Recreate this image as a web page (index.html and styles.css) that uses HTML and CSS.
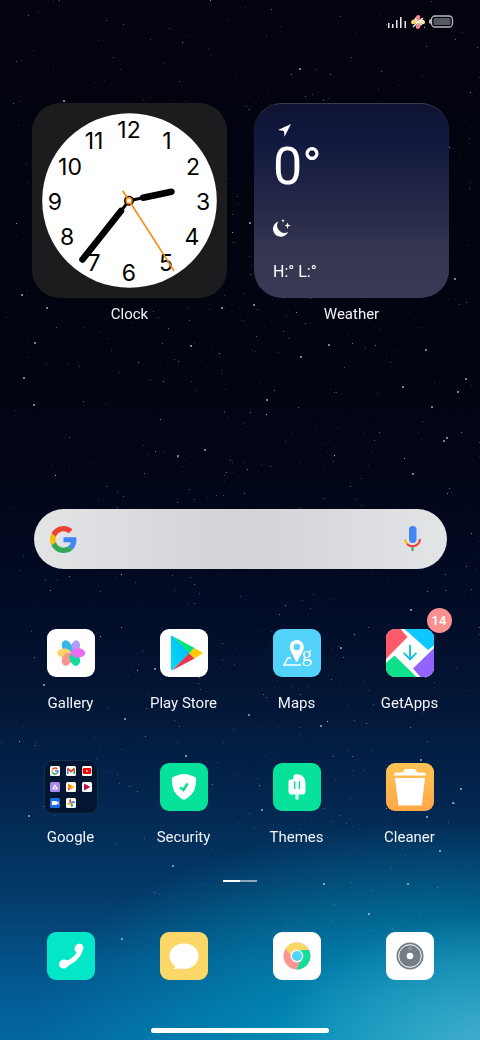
FILE: index.html
```
<!DOCTYPE html>
<html lang="en">
<head>
    <meta charset="UTF-8">
    <meta name="viewport" content="width=device-width, initial-scale=1">
    <title>Home Screen</title>
    <link rel="stylesheet" href="styles.css">
</head>
<body>
    <canvas id="stars" class="stars"></canvas>

    <div class="screen">
        <header class="status-bar">
            <svg class="signal" viewBox="0 0 20 12" aria-label="Signal">
                <path d="M1 12V7h1.500v5zM5 12V8h1.500v4zM9 12V4h1.500v8zM13 12V1h1.600v11zM17.500 12V5H19v7z" fill="#e8e8ea"/>
            </svg>
            <svg class="pinwheel" viewBox="0 0 14 14" aria-hidden="true">
                <path d="M7 7C3 5 4 1 7 0c3 0 3 3 0 7z" fill="#f58a93"/>
                <path d="M7 7c2-4 6-3 7 0 0 3-3 3-7 0z" fill="#fbe3a0"/>
                <path d="M7 7c4 2 3 6 0 7-3 0-3-3 0-7z" fill="#f58a93"/>
                <path d="M7 7c-2-4-6-3-7 0 0 3 3 3 7 0z" fill="#f7d56b"/>
                <path d="M6 8l-4 4M8 6l4-3M5.500 5.500L4 3M8.500 8.500L11 10" stroke="#fff" stroke-width="1.300"/>
                <circle cx="7" cy="7" r="1.300" fill="#fff"/>
            </svg>
            <svg class="battery" viewBox="0 0 25 13" aria-label="Battery">
                <path d="M2 4v5L0 8V5z" fill="#b9bbc0"/>
                <rect x="2.500" y="1" width="21" height="11" rx="3.500" fill="none" stroke="#b9bbc0" stroke-width="1.300"/>
                <rect x="4.500" y="3" width="17" height="7" rx="1.500" fill="#55595e"/>
            </svg>
        </header>

        <main>
            <section class="widgets">
                <div class="widget">
                    <div class="card clock">
                        <svg viewBox="0 0 195 195" aria-label="Clock face">
                            <circle cx="97.500" cy="97.500" r="87.300" fill="#fff"/>
                            <g class="numbers">
                                <text x="97" y="35">12</text>
                                <text x="135" y="46">1</text>
                                <text x="161" y="72">2</text>
                                <text x="171" y="107">3</text>
                                <text x="160" y="142">4</text>
                                <text x="134" y="168">5</text>
                                <text x="97" y="178">6</text>
                                <text x="62" y="168">7</text>
                                <text x="35" y="142">8</text>
                                <text x="23" y="107">9</text>
                                <text x="38" y="72">10</text>
                                <text x="62" y="46">11</text>
                            </g>
                            <g stroke="#000" stroke-linecap="round">
                                <path d="M97 97.700L111 94.700M97 97.700L89 108" stroke-width="3"/>
                                <path d="M111 94.700L139.500 88.700M89 108L50.500 156.500" stroke-width="6.500"/>
                            </g>
                            <circle cx="97" cy="97.700" r="5" fill="#000"/>
                            <path d="M90.700 87.700L142 167.700" stroke="#f98a0c" stroke-width="1.600"/>
                            <circle cx="97" cy="97.700" r="2.900" fill="#fff" stroke="#f98a0c" stroke-width="1.500"/>
                        </svg>
                    </div>
                    <p class="label">Clock</p>
                </div>
                <div class="widget">
                    <div class="card weather">
                        <svg class="arrow" viewBox="0 0 13 13" aria-hidden="true"><path d="M13 0L6.500 12.800 6 7 0 6z" fill="#fff"/></svg>
                        <p class="temp">0°</p>
                        <svg class="moon" viewBox="0 0 18 18" aria-hidden="true">
                            <path d="M5.500 2.500A7.800 7.800 0 1 0 15 13 7.300 7.300 0 0 1 5.500 2.500z" fill="#fff"/>
                            <path d="M14.500 3.500l.8 2.200 2.700.8-2.700.8-.8 2.700-.8-2.700-2.200-.8 2.200-.8zM10 0l.5 1.300 1.500.5-1.500.5L10 4l-.5-1.700L8 1.800l1.500-.5z" fill="#fff"/>
                        </svg>
                        <p class="range">H:° L:°</p>
                    </div>
                    <p class="label">Weather</p>
                </div>
            </section>

            <form class="search">
                <svg class="google" viewBox="0 0 48 48" aria-hidden="true">
                    <path fill="#ea4335" d="M24 9.500c3.540 0 6.710 1.220 9.210 3.600l6.850-6.850C35.900 2.380 30.470 0 24 0 14.620 0 6.510 5.380 2.560 13.220l7.980 6.190C12.430 13.720 17.740 9.500 24 9.500z"/>
                    <path fill="#4285f4" d="M46.980 24.550c0-1.570-.15-3.090-.38-4.550H24v9.020h12.940c-.58 2.960-2.260 5.480-4.780 7.180l7.730 6c4.510-4.180 7.090-10.360 7.090-17.650z"/>
                    <path fill="#fbbc05" d="M10.530 28.590c-.48-1.450-.76-2.990-.76-4.590s.27-3.140.76-4.590l-7.980-6.190C.92 16.460 0 20.120 0 24c0 3.880.92 7.540 2.560 10.780z"/>
                    <path fill="#34a853" d="M24 48c6.480 0 11.930-2.130 15.890-5.810l-7.730-6c-2.150 1.450-4.920 2.300-8.160 2.300-6.260 0-11.570-4.220-13.470-9.910l-7.980 6.190C6.510 42.620 14.620 48 24 48z"/>
                </svg>
                <input type="text" aria-label="Search">
                <button type="button" aria-label="Voice search">
                    <svg viewBox="0 0 18 26" aria-hidden="true">
                        <rect x="5.500" y="0" width="7.500" height="17" rx="3.700" fill="#4285f4"/>
                        <path d="M1.500 13c0 2 1 4 2.500 5.200" fill="none" stroke="#fbbc05" stroke-width="2"/>
                        <path d="M3.500 18c3 3 8 3 11 0 1.300-1.300 2-3 2-5" fill="none" stroke="#ea4335" stroke-width="2"/>
                        <path d="M9 21v4" stroke="#34a853" stroke-width="2"/>
                    </svg>
                </button>
            </form>

            <nav class="apps">
                <a class="app" href="#">
                    <svg class="icon" viewBox="0 0 48 48" aria-hidden="true">
                        <rect width="48" height="48" rx="9" fill="#fff"/>
                        <ellipse cx="28.300" cy="18" rx="4.500" ry="6.800" transform="rotate(18 28.300 18)" fill="#b39cfb"/>
                        <ellipse cx="20" cy="18" rx="4.800" ry="7" transform="rotate(-24 20 18)" fill="#38b6e4"/>
                        <ellipse cx="17" cy="24" rx="6.800" ry="4.600" fill="#fbd36d"/>
                        <ellipse cx="20" cy="30.300" rx="4.800" ry="6.800" transform="rotate(24 20 30.300)" fill="#fb9292"/>
                        <ellipse cx="27.800" cy="30" rx="5" ry="7" transform="rotate(-22 27.800 30)" fill="#0fdb9b"/>
                        <ellipse cx="31" cy="24" rx="7.200" ry="4.700" fill="#e86bf0"/>
                    </svg>
                    <span class="label">Gallery</span>
                </a>
                <a class="app" href="#">
                    <svg class="icon" viewBox="0 0 48 48" aria-hidden="true">
                        <defs>
                            <linearGradient id="playBlue" x1="1" y1="0" x2="0" y2="1">
                                <stop offset="0" stop-color="#00b2f5"/>
                                <stop offset="1" stop-color="#00dffb"/>
                            </linearGradient>
                        </defs>
                        <rect width="48" height="48" rx="9" fill="#fff"/>
                        <path d="M11 8v32c0 1 .5 1.500 1.300 1L30 24 12.300 7C11.500 6.500 11 7 11 8z" fill="url(#playBlue)"/>
                        <path d="M12.300 7L34.500 19 29.500 24.300z" fill="#06e37e"/>
                        <path d="M12.300 41.300L34.500 29.500 29.500 24z" fill="#ee3448"/>
                        <path d="M34.500 19l7 4c1 .6 1 1.400 0 2l-7 4.500-5.500-5.300z" fill="#ffca08"/>
                    </svg>
                    <span class="label">Play Store</span>
                </a>
                <a class="app" href="#">
                    <svg class="icon" viewBox="0 0 48 48" aria-hidden="true">
                        <rect width="48" height="48" rx="9" fill="#54d3fa"/>
                        <path d="M18 29h-3L11 36h17" fill="none" stroke="#fff" stroke-width="1.500"/>
                        <path fill-rule="evenodd" d="M23.800 11c-4 0-7 3-7 7 0 5 4 8 6 14.500h2c2-6.500 6-9.500 6-14.500 0-4-3-7-7-7zm0 3.700a3.300 3.300 0 1 1 0 6.600 3.300 3.300 0 0 1 0-6.600z" fill="#fff"/>
                        <text class="maps-g" x="34" y="32">g</text>
                    </svg>
                    <span class="label">Maps</span>
                </a>
                <a class="app" href="#">
                    <span class="icon-wrap">
                        <svg class="icon" viewBox="0 0 48 48" aria-hidden="true">
                            <defs>
                                <clipPath id="tile"><rect width="48" height="48" rx="9"/></clipPath>
                                <linearGradient id="down" x1="0" y1="0" x2="0" y2="1">
                                    <stop offset="0" stop-color="#12d98e"/>
                                    <stop offset="1" stop-color="#12b5ff"/>
                                </linearGradient>
                            </defs>
                            <g clip-path="url(#tile)">
                                <rect width="48" height="48" fill="#fff"/>
                                <path d="M0 0h14.500l7 8L0 30z" fill="#ff5a6c"/>
                                <path d="M18.500 0H48v16.500l-6 4.500z" fill="#0cc8ff"/>
                                <path d="M48 19v29H34.500L27 39.500z" fill="#9463ff"/>
                                <path d="M0 34l8.500-7.500L30.500 48H0z" fill="#0fe08c"/>
                            </g>
                            <path d="M23.100 16h1.900v12l4.800-4.800 1.300 1.300-7 7.200-7-7.200 1.300-1.300 4.700 4.800z" fill="url(#down)"/>
                        </svg>
                        <span class="badge">14</span>
                    </span>
                    <span class="label">GetApps</span>
                </a>

                <a class="app" href="#">
                    <span class="folder">
                        <svg viewBox="0 0 10 10"><rect width="10" height="10" rx="1.500" fill="#fff"/><path d="M2.500 3.500A3 3 0 0 1 7.300 3" stroke="#ea4335" stroke-width="1.500" fill="none"/><path d="M2.500 3.500a3 3 0 0 0 0 3" stroke="#fbbc05" stroke-width="1.500" fill="none"/><path d="M2.500 6.500a3 3 0 0 0 4.500.7" stroke="#34a853" stroke-width="1.500" fill="none"/><path d="M5 5h3a3 3 0 0 1-1 2.200" stroke="#4285f4" stroke-width="1.500" fill="none"/></svg>
                        <svg viewBox="0 0 10 10"><rect width="10" height="10" rx="1.500" fill="#fff"/><path d="M1.800 8V2.500" stroke="#4285f4" stroke-width="1.600"/><path d="M8.200 8V2.500" stroke="#34a853" stroke-width="1.600"/><path d="M1.500 2.500L5 5.500l3.500-3" stroke="#ea4335" stroke-width="1.800" fill="none"/></svg>
                        <svg viewBox="0 0 10 10"><rect width="10" height="10" rx="1.500" fill="#fff"/><rect x=".8" y="2" width="8.400" height="6" rx="1.300" fill="#f00"/><path d="M4.200 3.800v2.400L6.300 5z" fill="#fff"/></svg>
                        <svg viewBox="0 0 10 10"><rect width="10" height="10" rx="1.500" fill="#a98bf0"/><path d="M5 2.300l3 5H2z" fill="#fff"/><circle cx="5" cy="5.700" r=".9" fill="#a98bf0"/></svg>
                        <svg viewBox="0 0 10 10"><rect width="10" height="10" rx="1.500" fill="#fff"/><path d="M2 1.500v7L8.500 5z" fill="#fb8c1a"/><path d="M5 3.200v3.600L8.500 5z" fill="#fbc51a"/><path d="M2 6l2 1.500-2 1z" fill="#e34a3f"/></svg>
                        <svg viewBox="0 0 10 10"><rect width="10" height="10" rx="1.500" fill="#fff"/><path d="M2 1.500v7L8.500 5z" fill="#c2134f"/></svg>
                        <svg viewBox="0 0 10 10"><rect width="10" height="10" rx="1.500" fill="#1a6fe3"/><path d="M1.800 3h5v1.500L8.500 3.300v3.400L6.800 5.500V7h-5z" fill="#fff"/></svg>
                        <svg viewBox="0 0 10 10"><rect width="10" height="10" rx="1.500" fill="#fff"/><path d="M5 5V1a2 2 0 0 0 0 4z" fill="#ea4335"/><path d="M5 5h4a2 2 0 0 0-4 0z" fill="#4285f4"/><path d="M5 5v4a2 2 0 0 0 0-4z" fill="#34a853"/><path d="M5 5H1a2 2 0 0 0 4 0z" fill="#fbbc05"/></svg>
                    </span>
                    <span class="label">Google</span>
                </a>
                <a class="app" href="#">
                    <svg class="icon" viewBox="0 0 48 48" aria-hidden="true">
                        <rect width="48" height="48" rx="9" fill="#06e29a"/>
                        <path d="M24 11c3.500 0 8 1.500 11 3 .8.400 1 1 1 2 0 10-2 15.500-12 21-10-5.500-12-11-12-21 0-1 .2-1.600 1-2 3-1.500 7.500-3 11-3z" fill="#fff"/>
                        <path d="M20 24.500l3.500 2.500 4-6.500" fill="none" stroke="#06e29a" stroke-width="2.600"/>
                    </svg>
                    <span class="label">Security</span>
                </a>
                <a class="app" href="#">
                    <svg class="icon" viewBox="0 0 48 48" aria-hidden="true">
                        <rect width="48" height="48" rx="9" fill="#06e29a"/>
                        <path d="M22 11.500c6-1.500 10.500 3 10.500 8.500v8.500c0 2-1 3-3 3H18.500c-2 0-3-1-3-3V19c0-1.500.5-2.500 2-2.500 2 0 3-.5 3-2.500 0-1.200.3-2.200 1.500-2.500z" fill="#fff"/>
                        <path d="M24 31v4.200" stroke="#d5fbed" stroke-width="3.300" stroke-linecap="round"/>
                        <path d="M21.700 19v6.500M26.500 19v6.500" stroke="#06e29a" stroke-width="1.500" stroke-linecap="round"/>
                    </svg>
                    <span class="label">Themes</span>
                </a>
                <a class="app" href="#">
                    <svg class="icon" viewBox="0 0 48 48" aria-hidden="true">
                        <defs>
                            <linearGradient id="bin" x1="0" y1="0" x2="0" y2="1">
                                <stop offset="0" stop-color="#ffc353"/>
                                <stop offset="1" stop-color="#ffa748"/>
                            </linearGradient>
                        </defs>
                        <rect width="48" height="48" rx="9" fill="url(#bin)"/>
                        <path d="M8 12.500c0-2 1-3 3-3h5.500c1 0 1.500-3.500 3.500-3.500h8c2 0 2.500 3.500 3.500 3.500H37c2 0 3 1 3 3zM9 15h30L35.800 42.500H12.500z" fill="#fff"/>
                    </svg>
                    <span class="label">Cleaner</span>
                </a>
            </nav>

            <div class="pages"><span class="page active"></span><span class="page"></span></div>
        </main>

        <footer>
            <nav class="dock">
                <a class="app" href="#" aria-label="Phone">
                    <svg class="icon" viewBox="0 0 48 48">
                        <rect width="48" height="48" rx="9" fill="#04e6c8"/>
                        <path d="M33.500 18C31 25 25 30 17 32.500" fill="none" stroke="#fff" stroke-width="5"/>
                        <ellipse cx="32" cy="16.300" rx="4.800" ry="4.200" transform="rotate(-50 32 16.300)" fill="#fff"/>
                        <ellipse cx="17" cy="32" rx="5.200" ry="4.300" transform="rotate(-15 17 32)" fill="#fff"/>
                    </svg>
                </a>
                <a class="app" href="#" aria-label="Messages">
                    <svg class="icon" viewBox="0 0 48 48">
                        <rect width="48" height="48" rx="9" fill="#fad766"/>
                        <path d="M24 11.500c8.500 0 14.500 5.500 14.500 12.500S32.500 37 24 37c-2 0-3.500-.3-5-.7-1.500.7-3.500.7-5.500.7 1-.8 1.700-1.800 1.800-2.800-3.600-2.300-5.800-6-5.800-10.200 0-7 6-12.500 14.500-12.500z" fill="#fff"/>
                    </svg>
                </a>
                <a class="app" href="#" aria-label="Chrome">
                    <svg class="icon" viewBox="0 0 48 48">
                        <rect width="48" height="48" rx="9" fill="#fff"/>
                        <circle cx="24" cy="24" r="13.500" fill="#fb9494"/>
                        <path d="M18.500 24l-6-7A13.500 13.500 0 0 1 36 18H24z" fill="#fbd767"/>
                        <path d="M24 18h12a13.500 13.500 0 0 1-12.500 19.500L29 26z" fill="#0fdf9b"/>
                        <circle cx="24" cy="24" r="5.700" fill="#54d3fa" stroke="#fff" stroke-width="1.200"/>
                    </svg>
                </a>
                <a class="app" href="#" aria-label="Camera">
                    <svg class="icon" viewBox="0 0 48 48">
                        <rect width="48" height="48" rx="9" fill="#fff"/>
                        <circle cx="24" cy="24" r="13.500" fill="#757d86"/>
                        <circle cx="24" cy="24" r="11.300" fill="none" stroke="#fff"/>
                        <ellipse cx="24" cy="16.500" rx="2.500" ry="1.500" fill="#8f969e"/>
                        <circle cx="24" cy="24" r="3.300" fill="#fff"/>
                    </svg>
                </a>
            </nav>
            <div class="home-bar"></div>
        </footer>
    </div>

    <script src="stars.js"></script>
</body>
</html>
```
FILE: styles.css
```
* {
    box-sizing: border-box;
}

body {
    margin: 0;
    color: #f1f3f6;
    font-family: Roboto, sans-serif;
    background:
        radial-gradient(ellipse 48% 13% at 104% 101%, rgba(84, 178, 208, 0.85), rgba(84, 178, 208, 0.4) 50%, rgba(84, 178, 208, 0) 100%),
        radial-gradient(ellipse 85% 22% at 90% 101%, rgba(0, 160, 194, 0.9), rgba(0, 160, 194, 0.55) 42%, rgba(0, 160, 194, 0) 100%),
        linear-gradient(#02030f 0%, #020411 38%, #02061a 48%, #020c26 58%, #021433 66%, #032650 77%, #033b69 86%, #03548a 93%, #0466a2 100%);
}

p {
    margin: 0;
}

a {
    color: inherit;
    text-decoration: none;
}

svg {
    display: block;
}

.stars {
    position: absolute;
    top: 0;
    left: 0;
    width: 100%;
    height: 100%;
}

.screen {
    position: relative;
    display: flex;
    flex-direction: column;
    min-height: 100vh;
}

main {
    flex: 1;
    display: flex;
    flex-direction: column;
}

.status-bar {
    display: flex;
    justify-content: flex-end;
    align-items: center;
    gap: 4px;
    height: 43px;
    padding: 0 26px;
}

.signal {
    width: 20px;
    height: 12px;
}

.pinwheel {
    width: 14px;
    height: 14px;
}

.battery {
    width: 25px;
    height: 13px;
}

/* widgets */
.widgets {
    display: grid;
    grid-template-columns: 1fr 1fr;
    gap: 27px;
    margin-top: 60px;
    padding: 0 31px 0 32px;
}

.card {
    aspect-ratio: 1;
    border-radius: 28px;
    overflow: hidden;
}

.label {
    font-size: 15px;
    line-height: 20px;
    text-align: center;
    white-space: nowrap;
}

.widget .label {
    margin-top: 6px;
}

.clock {
    background: #1c1c1e;
}

.numbers {
    font: 400 23px Inter, sans-serif;
    text-anchor: middle;
}

.weather {
    padding: 20px 19px;
    border-top: 1px solid #3a3c52;
    background: linear-gradient(#0f1433, #11183f 18%, #1f2344 42%, #343651 75%, #383a56);
    color: #fff;
}

.arrow {
    width: 13px;
    height: 13px;
    margin-left: 5px;
}

.temp {
    font-size: 52px;
    line-height: 60px;
}

.moon {
    width: 18px;
    height: 18px;
    margin-top: 22px;
}

.range {
    margin-top: 25px;
    font-size: 16px;
    line-height: 20px;
}

/* search */
.search {
    display: flex;
    align-items: center;
    height: 60px;
    margin: auto 33px 0 34px;
    padding: 0 25px 0 16px;
    border-radius: 30px;
    background: linear-gradient(90deg, #e2e4e6, #d3d3d8 50%, #e2e4e6);
}

.google {
    width: 27px;
    height: 27px;
}

.search input {
    flex: 1;
    min-width: 0;
    height: 40px;
    padding: 0 12px;
    border: none;
    outline: none;
    background: none;
    font: inherit;
}

.search button {
    padding: 0;
    border: none;
    background: none;
    cursor: pointer;
}

.search button svg {
    width: 19px;
    height: 26px;
}

/* app grid */
.apps,
.dock {
    display: grid;
    grid-template-columns: repeat(4, 1fr);
    padding: 0 14px;
}

.apps {
    row-gap: 50px;
    margin-top: 60px;
}

.app {
    display: flex;
    flex-direction: column;
    align-items: center;
    gap: 16px;
}

.icon {
    width: 48px;
    height: 48px;
}

.icon-wrap {
    position: relative;
}

.badge {
    position: absolute;
    top: -21px;
    right: -18px;
    width: 25px;
    border-radius: 50%;
    background: #fb9090;
    color: #fff;
    font-size: 13px;
    font-weight: 500;
    line-height: 25px;
    text-align: center;
}

.maps-g {
    fill: #fff;
    font: 21px "Liberation Serif", serif;
    text-anchor: middle;
}

.folder {
    display: grid;
    grid-template-columns: repeat(3, 10px);
    grid-template-rows: repeat(3, 10px);
    gap: 6px;
    margin: -3px;
    padding: 5px;
    border: 1px solid #14304f;
    border-radius: 9px;
    background: #021631;
}

.pages {
    display: flex;
    justify-content: center;
    margin: 33px 0 50px;
}

.page {
    width: 17px;
    height: 2px;
    background: #8ba6bd;
}

.page.active {
    background: #fff;
}

.home-bar {
    width: 37%;
    height: 5px;
    margin: 48px auto 7px;
    border-radius: 3px;
    background: #fff;
}
```
FILE: stars.js
```
const canvas = document.getElementById('stars');
const ctx = canvas.getContext('2d');

// the brightest stars: x, y on a 480 x 1040 sky
const bright = [
    [24, 378], [34, 405], [35, 343], [191, 346], [426, 350], [466, 379], [432, 407],
    [267, 400], [178, 456], [205, 450], [444, 441], [413, 474], [403, 387], [329, 345],
    [301, 357], [447, 438], [458, 392], [125, 719], [155, 669], [44, 685], [341, 648],
    [249, 715], [321, 726], [173, 866], [461, 789], [427, 817], [453, 803], [440, 851],
    [421, 760], [262, 810], [408, 884], [324, 884], [250, 223], [254, 305], [455, 279],
    [47, 308], [64, 101], [122, 939], [369, 914], [29, 816], [186, 756], [411, 610],
    [300, 69], [22, 295], [222, 308]
];

// small seeded generator so the sky is the same on every load
let seed = 11;
function rand() {
    seed = (seed * 16807) % 2147483647;
    return seed / 2147483647;
}

function drawStars() {
    seed = 11;
    canvas.width = canvas.offsetWidth;
    canvas.height = canvas.offsetHeight;
    const sx = canvas.width / 480;
    const sy = canvas.height / 1040;
    const colors = ['255,255,255', '190,195,215', '110,150,220', '200,180,170'];

    for (let i = 0; i < 1150; i++) {
        const y = rand() * 930;
        // about half of them gather in the milky way band
        const x = i % 2 ? rand() * 480 : 240 + (rand() + rand() + rand() - 1.5) * 260;
        const alpha = (0.12 + Math.pow(rand(), 3) * 0.6) * (y > 820 ? 0.5 : 1);
        ctx.fillStyle = `rgba(${colors[Math.floor(rand() * 4)]},${alpha})`;
        ctx.fillRect(Math.round(x * sx), Math.round(y * sy), 1, 1);
    }

    bright.forEach(([x, y]) => {
        ctx.fillStyle = 'rgba(225,230,240,0.75)';
        ctx.beginPath();
        ctx.arc(x * sx, y * sy, 1, 0, Math.PI * 2);
        ctx.fill();
    });
}

drawStars();
window.addEventListener('resize', drawStars);
```
